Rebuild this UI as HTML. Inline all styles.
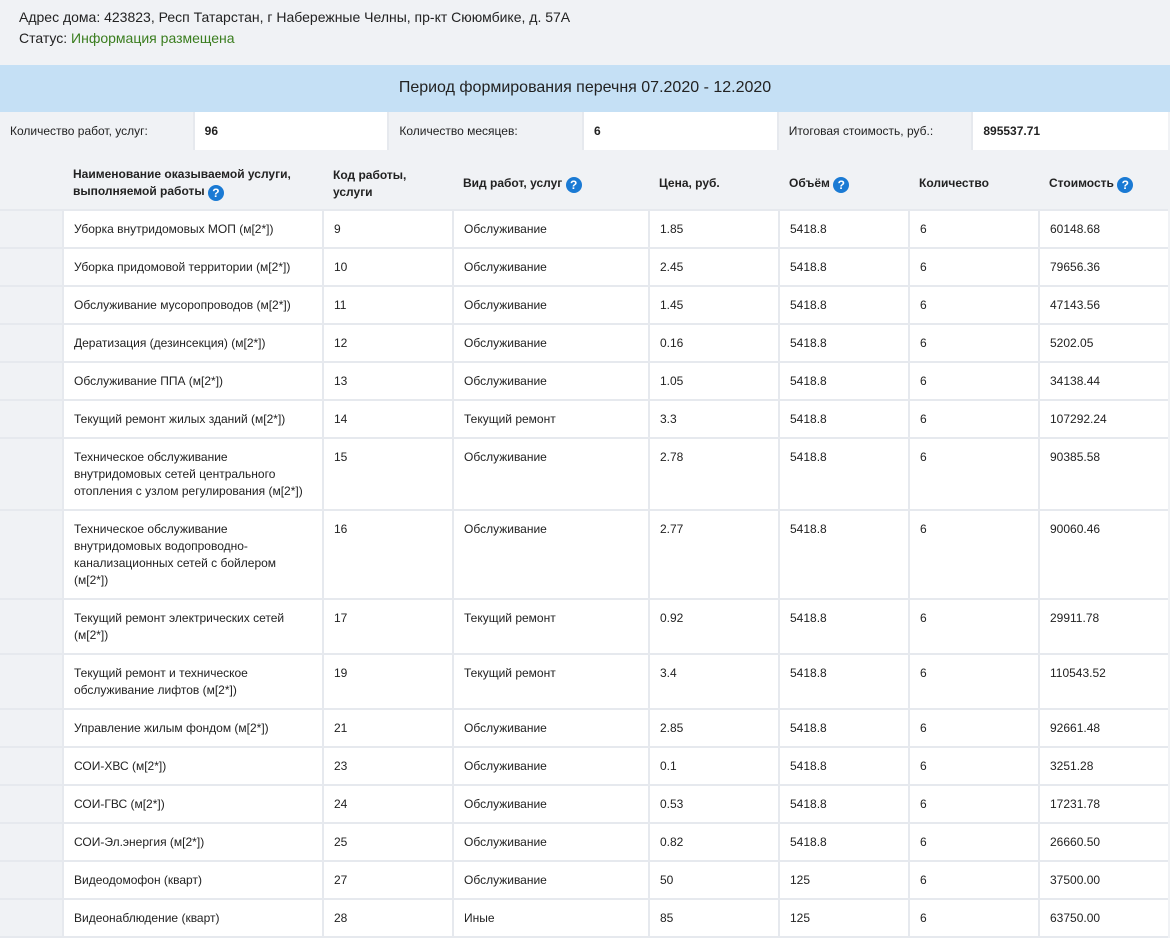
<!DOCTYPE html>
<html><head><meta charset="utf-8"><style>
body{margin:0;background:#f0f2f5;font-family:"Liberation Sans",Arial,sans-serif;color:#222;width:1170px;height:935px;overflow:hidden}
.top{position:absolute;left:19px;top:7px;font-size:14px;line-height:21px;color:#222}
.top .g{color:#3a7d1e}
.ban{position:absolute;left:0;top:65px;width:1170px;height:47px;background:#c5e0f5;text-align:center;line-height:46px;font-size:16px;color:#222}
.info{position:absolute;left:0;top:112px;width:1168px;height:38px;display:flex;font-size:12px;line-height:38px}
.info div{width:195px;padding-left:10px;box-sizing:border-box;border-right:2px solid #e6e9ee}
.info .l{background:#f0f2f5}.info .v{background:#fff;font-weight:bold}
table{position:absolute;left:0;top:152px;border-collapse:collapse;table-layout:fixed;width:1168px;font-size:12px}
td,th{border:2px solid #e6e9ee;vertical-align:top;padding:10px 10px 0 10px;line-height:17px;text-align:left;background:#fff}
th{background:#f0f2f5;font-weight:bold;border-left:0;border-right:0;border-top:0;padding-top:6px;vertical-align:middle}
td:first-child,th:first-child{background:#f0f2f5;border-left:0}
tr td:last-child{border-right:0}
.q{display:inline-block;width:16px;height:16px;border-radius:50%;background:#1a7ad4;color:#fff;font-size:12px;line-height:16px;text-align:center;vertical-align:-2px;font-weight:bold}
</style></head><body>
<div class="top">Адрес дома: 423823, Респ Татарстан, г Набережные Челны, пр-кт Сююмбике, д. 57А<br>Статус: <span class="g">Информация размещена</span></div>
<div class="ban">Период формирования перечня 07.2020 - 12.2020</div>
<div class="info"><div class="l">Количество работ, услуг:</div><div class="v">96</div><div class="l">Количество месяцев:</div><div class="v">6</div><div class="l">Итоговая стоимость, руб.:</div><div class="v" style="border-right:0">895537.71</div></div>
<table>
<colgroup><col style="width:63px"><col style="width:260px"><col style="width:130px"><col style="width:196px"><col style="width:130px"><col style="width:130px"><col style="width:130px"><col style="width:129px"></colgroup>
<tr style="height:58px"><th></th><th>Наименование оказываемой услуги,<br>выполняемой работы <span class="q">?</span></th><th>Код работы,<br>услуги</th><th>Вид работ, услуг <span class="q">?</span></th><th>Цена, руб.</th><th>Объём <span class="q">?</span></th><th>Количество</th><th>Стоимость <span class="q">?</span></th></tr>
<tr style="height:38px"><td></td><td>Уборка внутридомовых МОП (м[2*])</td><td>9</td><td>Обслуживание</td><td>1.85</td><td>5418.8</td><td>6</td><td>60148.68</td></tr>
<tr style="height:38px"><td></td><td>Уборка придомовой территории (м[2*])</td><td>10</td><td>Обслуживание</td><td>2.45</td><td>5418.8</td><td>6</td><td>79656.36</td></tr>
<tr style="height:38px"><td></td><td>Обслуживание мусоропроводов (м[2*])</td><td>11</td><td>Обслуживание</td><td>1.45</td><td>5418.8</td><td>6</td><td>47143.56</td></tr>
<tr style="height:38px"><td></td><td>Дератизация (дезинсекция) (м[2*])</td><td>12</td><td>Обслуживание</td><td>0.16</td><td>5418.8</td><td>6</td><td>5202.05</td></tr>
<tr style="height:38px"><td></td><td>Обслуживание ППА (м[2*])</td><td>13</td><td>Обслуживание</td><td>1.05</td><td>5418.8</td><td>6</td><td>34138.44</td></tr>
<tr style="height:38px"><td></td><td>Текущий ремонт жилых зданий (м[2*])</td><td>14</td><td>Текущий ремонт</td><td>3.3</td><td>5418.8</td><td>6</td><td>107292.24</td></tr>
<tr style="height:72px"><td></td><td>Техническое обслуживание<br>внутридомовых сетей центрального<br>отопления с узлом регулирования (м[2*])</td><td>15</td><td>Обслуживание</td><td>2.78</td><td>5418.8</td><td>6</td><td>90385.58</td></tr>
<tr style="height:89px"><td></td><td>Техническое обслуживание<br>внутридомовых водопроводно-<br>канализационных сетей с бойлером<br>(м[2*])</td><td>16</td><td>Обслуживание</td><td>2.77</td><td>5418.8</td><td>6</td><td>90060.46</td></tr>
<tr style="height:55px"><td></td><td>Текущий ремонт электрических сетей<br>(м[2*])</td><td>17</td><td>Текущий ремонт</td><td>0.92</td><td>5418.8</td><td>6</td><td>29911.78</td></tr>
<tr style="height:55px"><td></td><td>Текущий ремонт и техническое<br>обслуживание лифтов (м[2*])</td><td>19</td><td>Текущий ремонт</td><td>3.4</td><td>5418.8</td><td>6</td><td>110543.52</td></tr>
<tr style="height:38px"><td></td><td>Управление жилым фондом (м[2*])</td><td>21</td><td>Обслуживание</td><td>2.85</td><td>5418.8</td><td>6</td><td>92661.48</td></tr>
<tr style="height:38px"><td></td><td>СОИ-ХВС (м[2*])</td><td>23</td><td>Обслуживание</td><td>0.1</td><td>5418.8</td><td>6</td><td>3251.28</td></tr>
<tr style="height:38px"><td></td><td>СОИ-ГВС (м[2*])</td><td>24</td><td>Обслуживание</td><td>0.53</td><td>5418.8</td><td>6</td><td>17231.78</td></tr>
<tr style="height:38px"><td></td><td>СОИ-Эл.энергия (м[2*])</td><td>25</td><td>Обслуживание</td><td>0.82</td><td>5418.8</td><td>6</td><td>26660.50</td></tr>
<tr style="height:38px"><td></td><td>Видеодомофон (кварт)</td><td>27</td><td>Обслуживание</td><td>50</td><td>125</td><td>6</td><td>37500.00</td></tr>
<tr style="height:38px"><td></td><td>Видеонаблюдение (кварт)</td><td>28</td><td>Иные</td><td>85</td><td>125</td><td>6</td><td>63750.00</td></tr>
</table>
</body></html>
